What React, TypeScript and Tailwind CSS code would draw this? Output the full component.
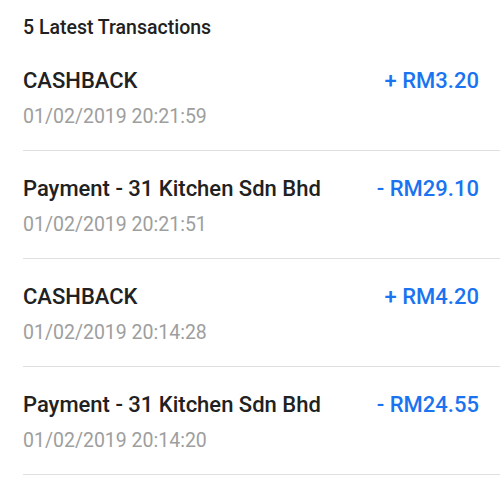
const transactions = [
  { title: "CASHBACK", date: "01/02/2019 20:21:59", amount: "+ RM3.20" },
  { title: "Payment - 31 Kitchen Sdn Bhd", date: "01/02/2019 20:21:51", amount: "- RM29.10" },
  { title: "CASHBACK", date: "01/02/2019 20:14:28", amount: "+ RM4.20" },
  { title: "Payment - 31 Kitchen Sdn Bhd", date: "01/02/2019 20:14:20", amount: "- RM24.55" },
];

const TransactionRow = ({ title, date, amount }: { title: string; date: string; amount: string }) => (
  <div className="flex h-[108px] flex-col border-b border-[#e0e0e0] pt-[24px]">
    <div className="flex items-center justify-between pr-[21px]">
      <span className="text-[22px] leading-[28px] font-medium text-[#212121]">{title}</span>
      <span className="text-[22px] leading-[28px] font-medium text-[#1a73f0]">{amount}</span>
    </div>
    <span className="mt-[8px] text-[19.5px] leading-[28px] text-[#9e9e9e]">{date}</span>
  </div>
);

export default function App() {
  return (
    <div className="h-[484px] w-[500px] overflow-hidden bg-white font-['Roboto',sans-serif]">
      <div className="pl-[23px]">
        <h2 className="pt-[16px] pb-[3px] text-[19.5px] leading-[24px] font-medium text-[#212121]">
          5 Latest Transactions
        </h2>
        <div className="flex flex-col">
          {transactions.map((t, i) => (
            <TransactionRow key={i} {...t} />
          ))}
        </div>
      </div>
    </div>
  );
}
